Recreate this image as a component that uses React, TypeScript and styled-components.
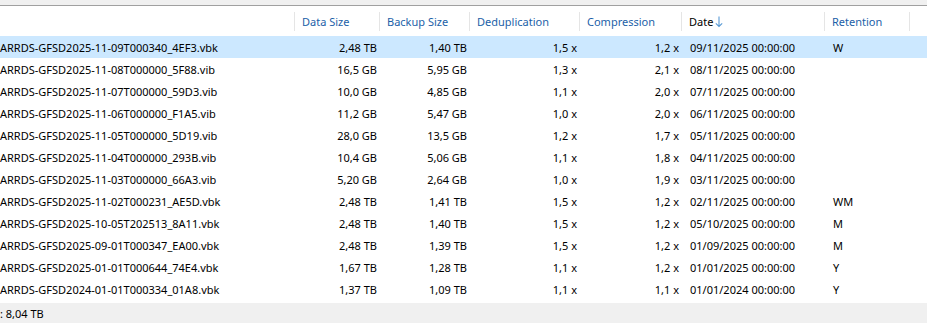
import styled, { createGlobalStyle } from 'styled-components';

const GlobalStyle = createGlobalStyle`
  html, body {
    margin: 0;
    padding: 0;
    background: #ffffff;
  }
  body {
    font-family: 'Noto Sans', 'Liberation Sans', sans-serif;
    font-size: 11px;
    color: #000000;
  }
`;

const COLS = '294px 85px 90px 110px 102px 143px 85px 2px';

const Window = styled.div`
  width: 927px;
  height: 323px;
  display: flex;
  flex-direction: column;
  overflow: hidden;
  background: #ffffff;
`;

const TopStrip = styled.div`
  height: 5px;
  background: #f0f0f0;
  border-bottom: 1px solid #a0a0a0;
`;

const HeaderRow = styled.div`
  display: grid;
  grid-template-columns: ${COLS};
  height: 30px;
  align-items: center;
`;

const HeaderCell = styled.div<{ $sorted?: boolean; $sep?: boolean }>`
  display: flex;
  align-items: center;
  gap: 2px;
  height: 19px;
  margin-top: 1px;
  padding-left: 7px;
  border-left: ${(p) => (p.$sep ? '1px solid #e5e5e5' : 'none')};
  color: ${(p) => (p.$sorted ? '#000000' : '#1c5fa8')};
  white-space: nowrap;
`;

const HeaderEnd = styled.div`
  height: 19px;
  margin-top: 1px;
  border-left: 1px solid #e5e5e5;
`;

const List = styled.div`
  display: flex;
  flex-direction: column;
`;

const Row = styled.div<{ $selected?: boolean }>`
  display: grid;
  grid-template-columns: ${COLS};
  height: 22px;
  align-items: center;
  background: ${(p) => (p.$selected ? '#cce8ff' : 'transparent')};
`;

const Cell = styled.div<{ $align?: 'left' | 'right' }>`
  text-align: ${(p) => (p.$align === 'right' ? 'right' : 'left')};
  padding: ${(p) => (p.$align === 'right' ? '0 2px 0 0' : '0 0 0 9px')};
  white-space: nowrap;
  overflow: hidden;
`;

const NameCell = styled.div`
  white-space: nowrap;
  overflow: hidden;
`;

const Spacer = styled.div`
  flex: 1;
`;

const Footer = styled.div`
  height: 20px;
  background: #f0f0f0;
  display: flex;
  align-items: center;
  white-space: nowrap;
`;

const SortArrow = () => (
  <svg width="8" height="12" viewBox="0 0 8 12">
    <path d="M4 0.5 V10.5 M0.8 7.3 L4 10.5 L7.2 7.3" fill="none" stroke="#5a9bd5" strokeWidth="1.1" />
  </svg>
);

type Entry = {
  name: string;
  data: string;
  backup: string;
  dedup: string;
  comp: string;
  date: string;
  retention: string;
};

const entries: Entry[] = [
  { name: 'ARRDS-GFSD2025-11-09T000340_4EF3.vbk', data: '2,48 TB', backup: '1,40 TB', dedup: '1,5 x', comp: '1,2 x', date: '09/11/2025 00:00:00', retention: 'W' },
  { name: 'ARRDS-GFSD2025-11-08T000000_5F88.vib', data: '16,5 GB', backup: '5,95 GB', dedup: '1,3 x', comp: '2,1 x', date: '08/11/2025 00:00:00', retention: '' },
  { name: 'ARRDS-GFSD2025-11-07T000000_59D3.vib', data: '10,0 GB', backup: '4,85 GB', dedup: '1,1 x', comp: '2,0 x', date: '07/11/2025 00:00:00', retention: '' },
  { name: 'ARRDS-GFSD2025-11-06T000000_F1A5.vib', data: '11,2 GB', backup: '5,47 GB', dedup: '1,0 x', comp: '2,0 x', date: '06/11/2025 00:00:00', retention: '' },
  { name: 'ARRDS-GFSD2025-11-05T000000_5D19.vib', data: '28,0 GB', backup: '13,5 GB', dedup: '1,2 x', comp: '1,7 x', date: '05/11/2025 00:00:00', retention: '' },
  { name: 'ARRDS-GFSD2025-11-04T000000_293B.vib', data: '10,4 GB', backup: '5,06 GB', dedup: '1,1 x', comp: '1,8 x', date: '04/11/2025 00:00:00', retention: '' },
  { name: 'ARRDS-GFSD2025-11-03T000000_66A3.vib', data: '5,20 GB', backup: '2,64 GB', dedup: '1,0 x', comp: '1,9 x', date: '03/11/2025 00:00:00', retention: '' },
  { name: 'ARRDS-GFSD2025-11-02T000231_AE5D.vbk', data: '2,48 TB', backup: '1,41 TB', dedup: '1,5 x', comp: '1,2 x', date: '02/11/2025 00:00:00', retention: 'WM' },
  { name: 'ARRDS-GFSD2025-10-05T202513_8A11.vbk', data: '2,48 TB', backup: '1,40 TB', dedup: '1,5 x', comp: '1,2 x', date: '05/10/2025 00:00:00', retention: 'M' },
  { name: 'ARRDS-GFSD2025-09-01T000347_EA00.vbk', data: '2,48 TB', backup: '1,39 TB', dedup: '1,5 x', comp: '1,2 x', date: '01/09/2025 00:00:00', retention: 'M' },
  { name: 'ARRDS-GFSD2025-01-01T000644_74E4.vbk', data: '1,67 TB', backup: '1,28 TB', dedup: '1,1 x', comp: '1,2 x', date: '01/01/2025 00:00:00', retention: 'Y' },
  { name: 'ARRDS-GFSD2024-01-01T000334_01A8.vbk', data: '1,37 TB', backup: '1,09 TB', dedup: '1,1 x', comp: '1,1 x', date: '01/01/2024 00:00:00', retention: 'Y' },
];

export default function App() {
  return (
    <Window>
      <GlobalStyle />
      <TopStrip />
      <HeaderRow>
        <HeaderCell />
        <HeaderCell $sep>Data Size</HeaderCell>
        <HeaderCell $sep>Backup Size</HeaderCell>
        <HeaderCell $sep>Deduplication</HeaderCell>
        <HeaderCell $sep>Compression</HeaderCell>
        <HeaderCell $sep $sorted>
          Date
          <SortArrow />
        </HeaderCell>
        <HeaderCell $sep>Retention</HeaderCell>
        <HeaderEnd />
      </HeaderRow>
      <List>
        {entries.map((e, i) => (
          <Row key={e.name} $selected={i === 0}>
            <NameCell>{e.name}</NameCell>
            <Cell $align="right">{e.data}</Cell>
            <Cell $align="right">{e.backup}</Cell>
            <Cell $align="right">{e.dedup}</Cell>
            <Cell $align="right">{e.comp}</Cell>
            <Cell>{e.date}</Cell>
            <Cell>{e.retention}</Cell>
            <div />
          </Row>
        ))}
      </List>
      <Spacer />
      <Footer>: 8,04 TB</Footer>
    </Window>
  );
}
